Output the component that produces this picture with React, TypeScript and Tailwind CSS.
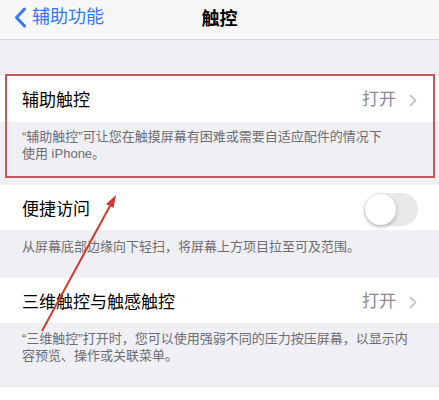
import React from 'react';

const font = { fontFamily: '"Liberation Sans", "Noto Sans CJK SC", sans-serif' };

function Chevron() {
  return (
    <svg width="8" height="13" viewBox="0 0 8 13" className="ml-[13px]">
      <path d="M1.5 1.5 L6.5 6.5 L1.5 11.5" fill="none" stroke="#c4c4c9" strokeWidth="1.8" strokeLinecap="round" strokeLinejoin="round" />
    </svg>
  );
}

function Row({ label, value, toggle, h }: { label: string; value?: string; toggle?: boolean; h: string }) {
  return (
    <div className={`flex items-center justify-between bg-white pl-[22px] pr-[22px] ${h}`}>
      <span className="pt-[4px] text-[17px] text-black">{label}</span>
      {value && (
        <div className="flex items-center pt-[3px]">
          <span className="text-[17px] text-[#8a8a8f]">{value}</span>
          <Chevron />
        </div>
      )}
      {toggle && (
        <div className="relative -mr-[1px] mt-[3px] h-[33px] w-[54px] rounded-full bg-[#e9e9eb]">
          <div className="absolute left-[1px] top-[1px] h-[31px] w-[31px] rounded-full bg-white shadow-[0_2px_4px_rgba(0,0,0,0.25)]" />
        </div>
      )}
    </div>
  );
}

export default function App() {
  return (
    <div className="relative h-[400px] w-[439px] overflow-hidden bg-[#efeff4]" style={font}>
      {/* Nav bar */}
      <div className="relative flex h-[40px] items-center border-b border-[#d9d9dc] bg-[#f7f7f8] pb-[5px]">
        <div className="flex items-center pl-[14px]">
          <svg width="13" height="21" viewBox="0 0 13 21">
            <path d="M10.5 2 L2.5 10.5 L10.5 19" fill="none" stroke="#3478f6" strokeWidth="3" strokeLinecap="round" strokeLinejoin="round" />
          </svg>
          <span className="ml-[5px] text-[18px] text-[#3478f6]">辅助功能</span>
        </div>
        <span className="absolute left-0 right-0 top-[6px] text-center text-[18px] font-semibold text-black">触控</span>
      </div>

      <div className="h-[35px]" />

      {/* Group 1 */}
      <div className="relative">
        <Row label="辅助触控" value="打开" h="h-[47px]" />
        <div className="pl-[22px] pt-[6px] pb-[23px] text-[13px] leading-[17px] text-[#6d6d72]">
          “辅助触控”可让您在触摸屏幕有困难或需要自适应配件的情况下
          <br />
          使用 iPhone。
        </div>
        <div className="absolute left-[5px] right-[4px] -top-[1px] bottom-[7px] border-2 border-[#c25a5a]" />
      </div>

      {/* Group 2 */}
      <Row label="便捷访问" toggle h="h-[45px]" />
      <div className="pl-[22px] pt-[8px] pb-[23px] text-[13px] leading-[17px] text-[#6d6d72]">
        从屏幕底部边缘向下轻扫，将屏幕上方项目拉至可及范围。
      </div>

      {/* Group 3 */}
      <Row label="三维触控与触感触控" value="打开" h="h-[45px]" />
      <div className="pl-[22px] pt-[7px] pb-[22px] text-[13px] leading-[17px] text-[#6d6d72]">
        “三维触控”打开时，您可以使用强弱不同的压力按压屏幕，以显示内
        <br />
        容预览、操作或关联菜单。
      </div>

      <div className="h-[20px] border-t border-[#e2e2e6] bg-white" />

      {/* Annotation arrow */}
      <svg className="pointer-events-none absolute left-0 top-0" width="439" height="400" viewBox="0 0 439 400">
        <line x1="42" y1="331" x2="111" y2="204" stroke="#cf3b33" strokeWidth="2" />
        <polygon points="116,195 113.5,208 106,204" fill="#cf3b33" />
      </svg>
    </div>
  );
}
